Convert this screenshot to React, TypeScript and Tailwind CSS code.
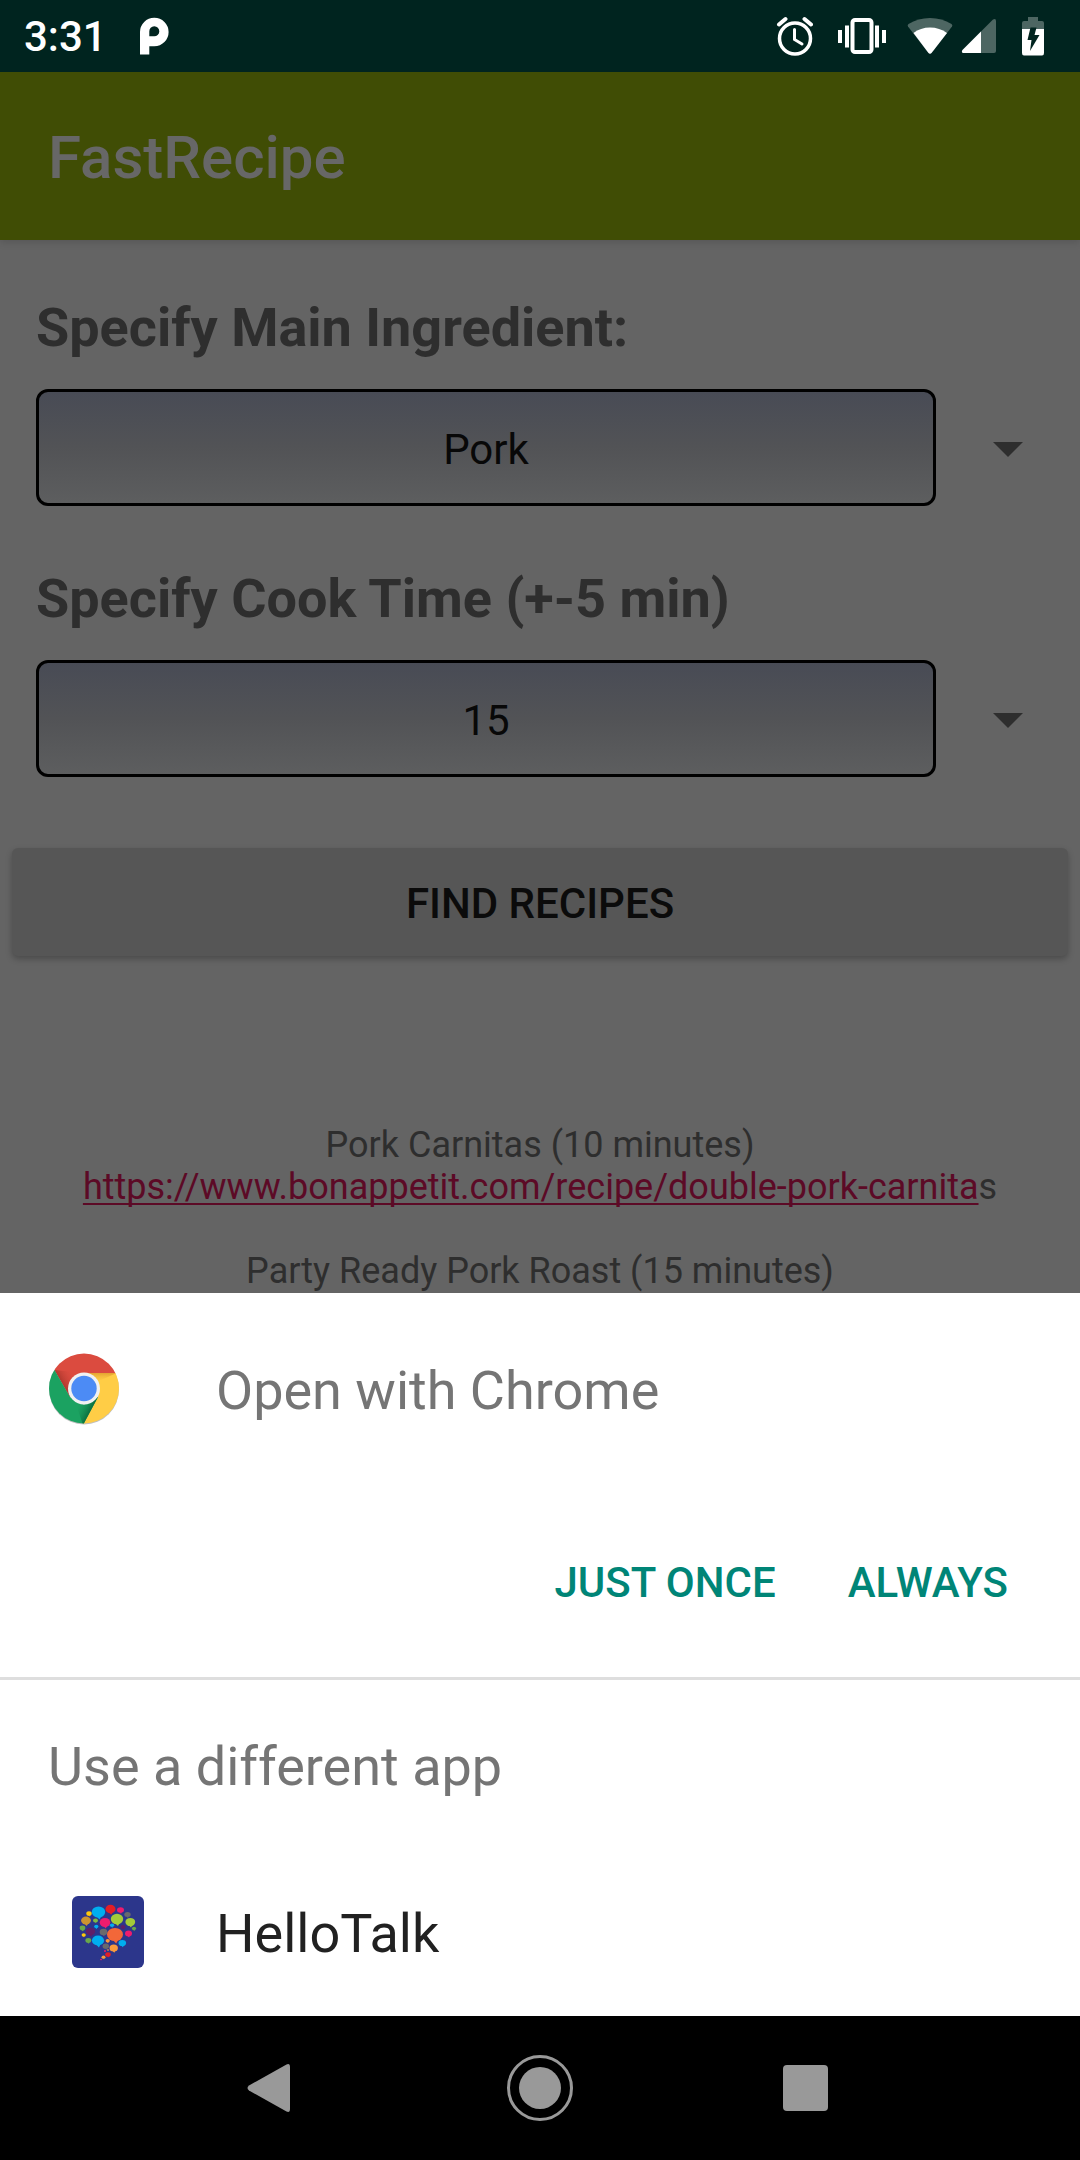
import React from "react";

function StatusBar() {
  return (
    <header className="flex h-[72px] shrink-0 items-center bg-[#00241f] pl-6 pr-[35px] text-white">
      <time className="text-[42px] leading-[49px] font-medium">3:31</time>
      <svg className="ml-8 h-[38px] w-[30px]" viewBox="0 0 30 38" fill="#fff" aria-label="App notification">
        <path
          fillRule="evenodd"
          d="M1 37.500V15A14.300 14.300 0 1 1 15.300 29.300H10.300V37.500ZM10.300 19.300H15A5 5 0 1 0 10.300 14.500Z"
        />
      </svg>
      <div className="ml-auto flex items-center">
        <svg className="h-[40px] w-[38px]" viewBox="0 0 38 40" fill="none" stroke="#fff" aria-label="Alarm">
          <circle cx="20" cy="22.500" r="15.500" strokeWidth="3.500" />
          <path d="M4 8.500L10.500 3M36 8.500L29.500 3" strokeWidth="4" strokeLinecap="round" />
          <path d="M19.500 13.500V23.500L27 28" strokeWidth="3" strokeLinecap="round" />
        </svg>
        <svg className="ml-[24px] h-[36px] w-[50px]" viewBox="0 0 50 36" fill="#fff" aria-label="Vibrate">
          <rect x="15.500" y="2" width="19" height="32" rx="2.500" fill="none" stroke="#fff" strokeWidth="4" />
          <rect x="1" y="12" width="4" height="13" />
          <rect x="8" y="7.500" width="4" height="22" />
          <rect x="38" y="7.500" width="4" height="22" />
          <rect x="45" y="12" width="4" height="13" />
        </svg>
        <svg className="ml-[20px] h-[38px] w-[46px]" viewBox="0 0 46 38" fill="#fff" aria-label="Wi-Fi">
          <path
            d="M1 9.500Q0 8 1.500 7Q11 1 23 1Q35 1 44.500 7Q46 8 45 9.500L24.500 36Q23 37.500 21.500 36Z"
            fill="#4d6662"
          />
          <path d="M6.500 16Q13.500 10.500 23 10.500Q32.500 10.500 40 16L24.500 36Q23 37.500 21.500 36Z" />
        </svg>
        <svg className="ml-[8px] h-[36px] w-[36px]" viewBox="0 0 36 36" fill="#fff" aria-label="Signal">
          <path d="M2 35Q0 34 1.500 32L32 1.500Q35 0 35 3V33Q35 35 33 35Z" fill="#4d6662" />
          <path d="M20 13.500V35H2Q0 34 1.500 32Z" />
        </svg>
        <svg className="ml-[24px] h-[40px] w-[24px]" viewBox="0 0 24 40" aria-label="Battery charging">
          <path d="M1 14V7Q1 5 3 5H7V1H17V5H21Q23 5 23 7V14Z" fill="#4d6662" />
          <path d="M1 13H23V37Q23 39.500 21 39.500H3Q1 39.500 1 37Z" fill="#fff" />
          <path d="M9.500 11.500H15.500L13.500 19H18.500L9 35L10.500 24H6.500Z" fill="#00241f" />
        </svg>
      </div>
    </header>
  );
}

type SpinnerProps = { id: string; label: string; value: string; options: string[] };

function Spinner({ id, label, value, options }: SpinnerProps) {
  return (
    <div className="flex flex-col">
      <label htmlFor={id} className="px-9 text-[54px] leading-[64px] font-bold text-[#2e2e2e]">
        {label}
      </label>
      <div className="mt-[29px] flex items-center pl-9">
        <select
          id={id}
          defaultValue={value}
          className="h-[117px] min-w-0 flex-1 appearance-none rounded-[12px] border-[3px] border-black bg-linear-to-b from-[#484b55] via-[#525356] to-[#5d5e5f] pt-1 text-center text-[42px] leading-[49px] text-[#080808]"
        >
          {options.map((o) => (
            <option key={o}>{o}</option>
          ))}
        </select>
        <div className="flex w-36 justify-center">
          <svg className="mt-[3px] h-[15px] w-[30px]" viewBox="0 0 30 15" fill="#2e2e2e" aria-hidden="true">
            <path d="M0 0H30L15 15Z" />
          </svg>
        </div>
      </div>
    </div>
  );
}

function RecipeScreen() {
  return (
    <div className="flex min-h-0 flex-1 flex-col overflow-hidden bg-[#646464]">
      <div className="z-10 flex h-[168px] shrink-0 items-center bg-[#404d05] px-12 pt-1 shadow-[0_2px_8px_rgba(0,0,0,0.15)]">
        <h1 className="text-[60px] leading-[70px] font-medium text-[#676767]">FastRecipe</h1>
      </div>
      <main className="flex flex-col pt-[56px]">
        <div className="flex flex-col gap-[61px]">
          <Spinner id="ingredient" label="Specify Main Ingredient:" value="Pork" options={["Pork", "Chicken", "Beef"]} />
          <Spinner id="time" label="Specify Cook Time (+-5 min)" value="15" options={["5", "15", "30"]} />
        </div>
        <button
          type="button"
          className="mx-3 mt-[71px] h-[108px] rounded-[6px] bg-[#565656] pt-[2px] text-[42px] leading-[49px] font-medium text-[#0b0b0b] shadow-[0_3px_6px_rgba(0,0,0,0.25)]"
        >
          FIND RECIPES
        </button>
        <div className="mt-[168px] flex flex-col text-center text-[36px] leading-[42px] whitespace-nowrap text-[#2e2e2e]">
          <p>Pork Carnitas (10 minutes)</p>
          <p>
            <a
              href="https://www.bonappetit.com/recipe/double-pork-carnita"
              className="text-[#5c0a26] underline decoration-2 underline-offset-4 [text-decoration-skip-ink:none]"
            >
              https://www.bonappetit.com/recipe/double-pork-carnita
            </a>
            s
          </p>
          <p className="mt-[42px]">Party Ready Pork Roast (15 minutes)</p>
        </div>
      </main>
    </div>
  );
}

function ChromeIcon() {
  return (
    <svg className="h-[72px] w-[72px] shrink-0" viewBox="0 0 72 72" aria-hidden="true">
      <defs>
        <clipPath id="disc">
          <circle cx="36" cy="35.500" r="35" />
        </clipPath>
        <linearGradient id="redShade" gradientUnits="userSpaceOnUse" x1="13" y1="31" x2="27" y2="23">
          <stop offset="0" stopColor="#a8352b" />
          <stop offset="1" stopColor="#db4b3f" stopOpacity="0" />
        </linearGradient>
        <linearGradient id="yellowShade" gradientUnits="userSpaceOnUse" x1="0" y1="19" x2="0" y2="30">
          <stop offset="0" stopColor="#dd9a2c" />
          <stop offset="1" stopColor="#ffcd46" stopOpacity="0" />
        </linearGradient>
        <linearGradient id="greenShade" gradientUnits="userSpaceOnUse" x1="43" y1="58" x2="29" y2="51">
          <stop offset="0" stopColor="#0b6b3c" />
          <stop offset="1" stopColor="#1ba261" stopOpacity="0" />
        </linearGradient>
      </defs>
      <circle cx="36" cy="36.500" r="35" fill="#000" opacity="0.250" />
      <g clipPath="url(#disc)">
        <path d="M0 0H72V20H36L22 44L6.500 17Z" fill="#db4b3f" />
        <path d="M6.500 17L22 44L36 20Z" fill="url(#redShade)" />
        <path d="M36 20H72V72H34L50 44Z" fill="#ffcd46" />
        <path d="M36 20H69L46 30Z" fill="url(#yellowShade)" />
        <path d="M6.500 17L0 20V72H35L50 44L36 52L22 44Z" fill="#1ba261" />
        <path d="M50 44L35 72L28 51Z" fill="url(#greenShade)" />
      </g>
      <circle cx="36" cy="35.500" r="16" fill="#f1f1f1" />
      <circle cx="36" cy="35.500" r="12.700" fill="#4c8bf5" />
    </svg>
  );
}

/* Each bubble: centre x, centre y, horizontal radius, vertical radius, colour. */
const bubbles: [number, number, number, number, string][] = [
  [26.500, 16, 6.700, 5.500, "#00aeef"],
  [38.500, 13, 5, 4.300, "#e31e26"],
  [48.500, 14, 3.500, 2.800, "#ee1c6e"],
  [55.500, 18.500, 3.200, 2.500, "#6a6a6c"],
  [17, 17.500, 2.700, 2.300, "#fdc90b"],
  [14, 24.500, 4.900, 4, "#cb9430"],
  [23.500, 24.500, 2.500, 2.100, "#7fba42"],
  [33, 26.500, 5.300, 4.500, "#ee1c6e"],
  [45, 23, 6.200, 5.200, "#a3cb39"],
  [58.300, 26, 4.900, 4.100, "#a3cb39"],
  [10.500, 32, 2.800, 2.400, "#6aa84b"],
  [24.300, 30.500, 2.100, 1.800, "#00aeef"],
  [40, 29.300, 2.200, 1.800, "#00aeef"],
  [51, 31, 2.500, 2.100, "#5f1f68"],
  [62, 32.500, 2.100, 1.800, "#6aa84b"],
  [18.500, 35.500, 4.600, 3.800, "#5f1f68"],
  [31.500, 36, 3.800, 3.200, "#6a6a6c"],
  [43, 38.500, 8, 6.600, "#f26739"],
  [56.500, 37.500, 3.500, 2.900, "#ee1c6e"],
  [11.700, 39, 2.100, 1.700, "#fdc90b"],
  [16.300, 44.500, 2.900, 2.400, "#6aa84b"],
  [26, 44.500, 6.100, 5.100, "#00aeef"],
  [35.700, 44.700, 2.100, 1.700, "#fa9a3c"],
  [50.300, 47, 3.800, 3.100, "#00aeef"],
  [33.800, 50.200, 3.200, 2.600, "#6a6a6c"],
  [41.700, 52, 4.200, 3.500, "#fa9a3c"],
  [33, 55, 1, 0.900, "#ee1c6e"],
  [36, 54, 1, 0.800, "#fa9a3c"],
  [36, 58.500, 2.800, 2.300, "#e31e26"],
  [31.500, 61.200, 2, 1.600, "#fa9a3c"],
  [29, 63.500, 1, 0.800, "#ee1c6e"],
];

function HelloTalkIcon() {
  return (
    <svg className="h-[72px] w-[72px] shrink-0" viewBox="0 0 72 72" aria-hidden="true">
      <rect width="72" height="72" rx="6" fill="#2c368b" />
      {bubbles.map(([x, y, rx, ry, fill], i) => (
        <g key={i} fill={fill}>
          <ellipse cx={x} cy={y} rx={rx} ry={ry} />
          <path d={`M${x - rx * 0.3} ${y + ry * 0.8}L${x + rx * 0.15} ${y + ry * 1.35}L${x + rx * 0.4} ${y + ry * 0.8}Z`} />
        </g>
      ))}
    </svg>
  );
}

function OpenWithSheet() {
  return (
    <section role="dialog" aria-label="Open with" className="flex shrink-0 flex-col bg-white pb-3">
      <div className="flex items-center gap-24 px-12 pt-[60px]">
        <ChromeIcon />
        <h2 className="pt-1 text-[54px] leading-[64px] text-[#757575]">Open with Chrome</h2>
      </div>
      <div className="mt-[85px] flex justify-end gap-[24px] pr-12 text-[42px] leading-[49px] font-medium text-[#008577]">
        <button type="button" className="h-36 px-6">JUST ONCE</button>
        <button type="button" className="h-36 px-6">ALWAYS</button>
      </div>
      <div className="mt-[23px] h-[3px] bg-[#dedede]" />
      <p className="mt-[55px] px-12 text-[54px] leading-[64px] text-[#757575]">Use a different app</p>
      <button type="button" className="mt-[61px] flex h-36 items-center gap-[72px] px-[72px] text-left">
        <HelloTalkIcon />
        <span className="pt-1 text-[54px] leading-[64px] text-[#212121]">HelloTalk</span>
      </button>
    </section>
  );
}

function NavBar() {
  return (
    <nav className="flex h-36 shrink-0 items-center justify-center gap-[196px] bg-black">
      <button type="button" aria-label="Back" className="flex w-[72px] justify-center">
        <svg className="h-[72px] w-[72px]" viewBox="0 0 72 72" fill="#999">
          <path d="M13 33.500L50.500 12.500Q54 11 54 15V57Q54 61 50.500 59.500L13 38.500Q10 36 13 33.500Z" />
        </svg>
      </button>
      <button type="button" aria-label="Home" className="flex w-[72px] justify-center">
        <svg className="h-[72px] w-[72px]" viewBox="0 0 72 72" fill="#999">
          <circle cx="36" cy="36" r="31.500" fill="none" stroke="#999" strokeWidth="3" />
          <circle cx="36" cy="36" r="21" />
        </svg>
      </button>
      <button type="button" aria-label="Recent apps" className="flex w-[72px] justify-center">
        <svg className="h-[72px] w-[72px]" viewBox="0 0 72 72" fill="#999">
          <rect x="11" y="13" width="45" height="46" rx="4" />
        </svg>
      </button>
    </nav>
  );
}

export default function App() {
  return (
    <div className="flex h-screen flex-col overflow-hidden bg-black font-[Roboto,sans-serif]">
      <StatusBar />
      <RecipeScreen />
      <OpenWithSheet />
      <NavBar />
    </div>
  );
}
